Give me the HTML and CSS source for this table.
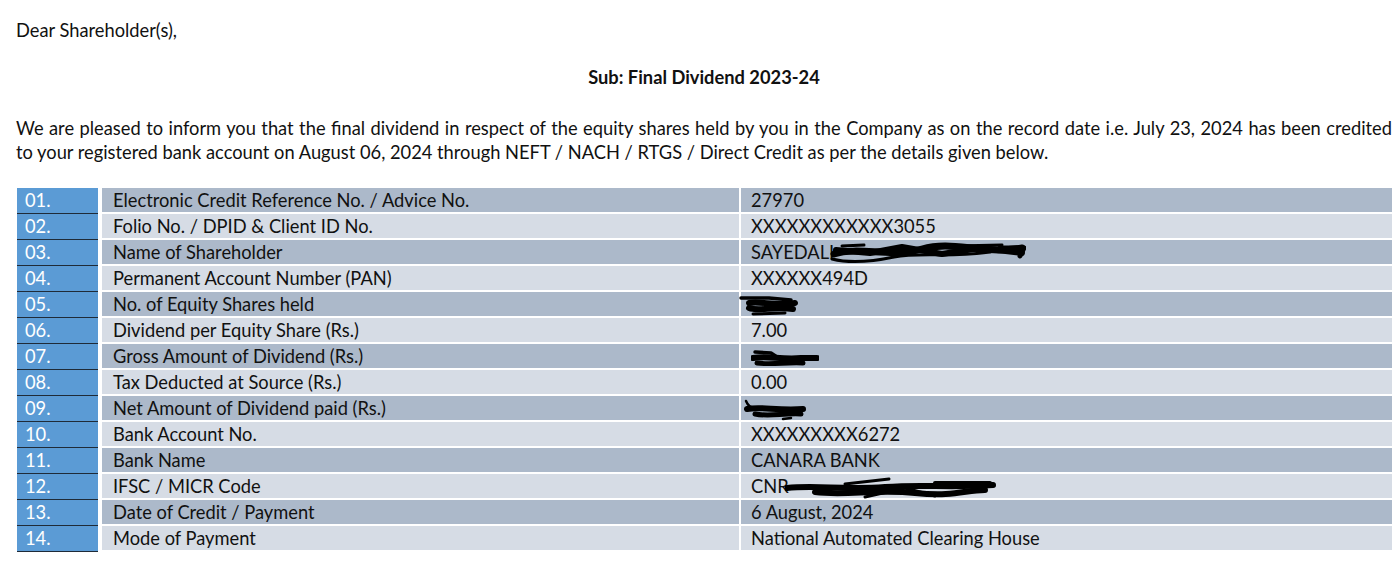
FILE: index.html
```html
<!DOCTYPE html>
<html lang="en">
<head>
<meta charset="utf-8">
<title>Final Dividend 2023-24</title>
<link rel="stylesheet" href="styles.css">
</head>
<body>
<div class="page">
  <p class="greeting">Dear Shareholder(s),</p>
  <p class="subject">Sub: Final Dividend 2023-24</p>
  <p class="intro"><span class="justified-line">We are pleased to inform you that the final dividend in respect of the equity shares held by you in the Company as on the record date i.e. July 23, 2024 has been credited</span>
  to your registered bank account on August 06, 2024 through NEFT / NACH / RTGS / Direct Credit as per the details given below.</p>

  <div class="table">
    <div class="row dark"><div class="num">01.</div><div class="label">Electronic Credit Reference No. / Advice No.</div><div class="value">27970</div></div>
    <div class="row light"><div class="num">02.</div><div class="label">Folio No. / DPID &amp; Client ID No.</div><div class="value">XXXXXXXXXXXX3055</div></div>
    <div class="row dark"><div class="num">03.</div><div class="label">Name of Shareholder</div><div class="value">SAYEDALI<svg class="scribble s-name" width="196" height="24" viewBox="0 0 196 24"><path d="M4 14 C30 6 60 18 92 9 S150 15 192 8" stroke-width="7"/><path d="M6 10 L40 13 L72 7 L112 14 L150 8 L192 13" stroke-width="6"/><path d="M2 19 C18 23 40 22 64 17 C90 12 120 18 160 12" stroke-width="3"/><path d="M12 6 L34 5 M126 6 L172 5" stroke-width="3"/><path d="M170 8 L194 8 L190 16" stroke-width="5"/></svg></div></div>
    <div class="row light"><div class="num">04.</div><div class="label">Permanent Account Number (PAN)</div><div class="value">XXXXXX494D</div></div>
    <div class="row dark"><div class="num">05.</div><div class="label">No. of Equity Shares held</div><div class="value"><svg class="scribble s-shares" width="60" height="24" viewBox="0 0 60 24"><path d="M2 5 L30 5 L52 7" stroke-width="3.5"/><path d="M10 10 C22 8 36 13 56 10" stroke-width="6"/><path d="M10 15 C20 19 34 13 54 16" stroke-width="6"/><path d="M14 21 L46 20" stroke-width="3"/></svg></div></div>
    <div class="row light"><div class="num">06.</div><div class="label">Dividend per Equity Share (Rs.)</div><div class="value">7.00</div></div>
    <div class="row dark"><div class="num">07.</div><div class="label">Gross Amount of Dividend (Rs.)</div><div class="value"><svg class="scribble s-gross" width="68" height="22" viewBox="0 0 68 22"><path d="M4 5 L20 6 L26 10" stroke-width="3.5"/><path d="M2 11 C16 8 30 13 50 11 L66 11" stroke-width="6"/><path d="M6 16 C20 18 36 15 52 16" stroke-width="5"/></svg></div></div>
    <div class="row light"><div class="num">08.</div><div class="label">Tax Deducted at Source (Rs.)</div><div class="value">0.00</div></div>
    <div class="row dark"><div class="num">09.</div><div class="label">Net Amount of Dividend paid (Rs.)</div><div class="value"><svg class="scribble s-net" width="68" height="24" viewBox="0 0 68 24"><path d="M3 3 C5 8 8 10 12 10" stroke-width="2.5"/><path d="M4 11 C18 8 34 13 60 11" stroke-width="6"/><path d="M12 16 C26 19 40 15 58 16" stroke-width="5"/><path d="M40 21 L48 20" stroke-width="2.5"/></svg></div></div>
    <div class="row light"><div class="num">10.</div><div class="label">Bank Account No.</div><div class="value">XXXXXXXXX6272</div></div>
    <div class="row dark"><div class="num">11.</div><div class="label">Bank Name</div><div class="value">CANARA BANK</div></div>
    <div class="row light"><div class="num">12.</div><div class="label">IFSC / MICR Code</div><div class="value">CNR<svg class="scribble s-ifsc" width="212" height="26" viewBox="0 0 212 26"><path d="M2 13 C30 10 60 15 100 12 S160 13 208 10" stroke-width="6"/><path d="M30 17 C60 21 90 14 130 18 S180 15 200 15" stroke-width="6"/><path d="M60 9 L104 4" stroke-width="3"/><path d="M80 22 L120 13 L150 21" stroke-width="3"/><path d="M150 8 L205 8" stroke-width="4"/></svg></div></div>
    <div class="row dark"><div class="num">13.</div><div class="label">Date of Credit / Payment</div><div class="value">6 August, 2024</div></div>
    <div class="row light"><div class="num">14.</div><div class="label">Mode of Payment</div><div class="value">National Automated Clearing House</div></div>
  </div>
</div>
</body>
</html>
```

FILE: styles.css
```css
html, body {
  margin: 0;
  padding: 0;
  background: #ffffff;
}

.page {
  padding: 18px 8px 0 16px;
  font-family: "Lato", "Liberation Sans", sans-serif;
  font-size: 18.3px;
  line-height: 24px;
  color: #111111;
}

.page p {
  margin: 0;
}

.greeting {
  margin-bottom: 23px !important;
}

.subject {
  text-align: center;
  font-weight: 700;
  margin-bottom: 27px !important;
}

.intro {
  margin-bottom: 24px !important;
}

.justified-line {
  display: block;
  text-align: justify;
  text-align-last: justify;
}

.table {
  margin-left: 1px;
  display: flex;
  flex-direction: column;
}

.row {
  display: grid;
  grid-template-columns: 81px 641px 1fr;
  align-items: start;
  height: 26px;
}

.num {
  height: 26px;
  box-sizing: border-box;
  background: #5b9bd5;
  border-bottom: 1px solid #1f2b38;
  color: #ffffff;
  padding-left: 8px;
  line-height: 25px;
}

.label,
.value {
  height: 24px;
  line-height: 24px;
  white-space: nowrap;
}

.label {
  margin-left: 4px;
  padding-left: 11px;
}

.value {
  margin-left: 2px;
  padding-left: 10px;
}

.dark .label,
.dark .value {
  background: #acb9ca;
}

.light .label,
.light .value {
  background: #d6dce5;
}

.scribble {
  vertical-align: middle;
  fill: none;
  stroke: #000000;
  stroke-linecap: round;
  stroke-linejoin: round;
}

.s-name {
  margin-left: -4px;
  margin-top: -4px;
}

.s-shares {
  margin-left: -12px;
  margin-top: -2px;
}

.s-net {
  margin-left: -8px;
}

.s-ifsc {
  margin-left: -4px;
}
```
